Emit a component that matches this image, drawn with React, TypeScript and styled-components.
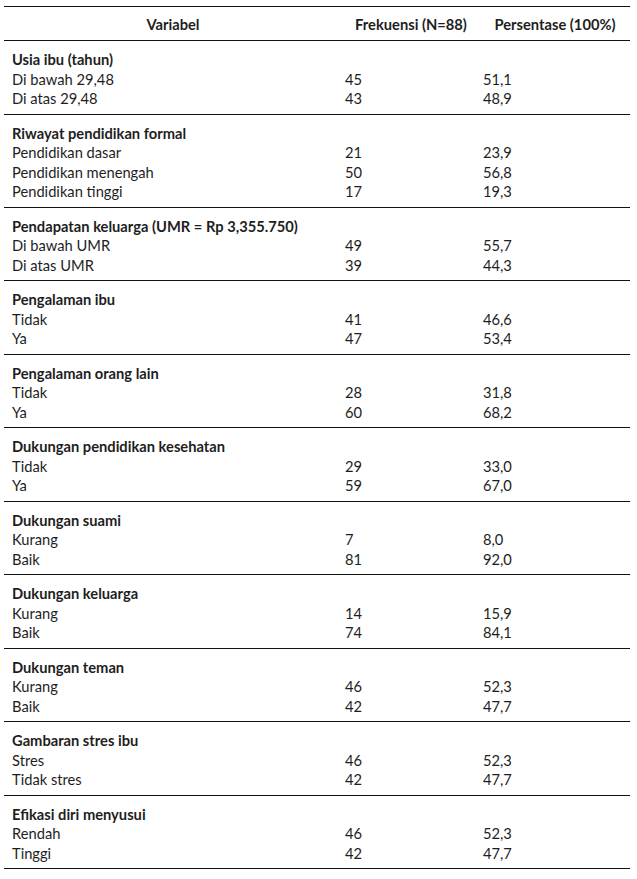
import styled, { createGlobalStyle } from "styled-components";

type Item = { label: string; freq: string; pct: string };
type Group = { title: string; items: Item[] };

const groups: Group[] = [
  {
    title: "Usia ibu (tahun)",
    items: [
      { label: "Di bawah 29,48", freq: "45", pct: "51,1" },
      { label: "Di atas 29,48", freq: "43", pct: "48,9" },
    ],
  },
  {
    title: "Riwayat pendidikan formal",
    items: [
      { label: "Pendidikan dasar", freq: "21", pct: "23,9" },
      { label: "Pendidikan menengah", freq: "50", pct: "56,8" },
      { label: "Pendidikan tinggi", freq: "17", pct: "19,3" },
    ],
  },
  {
    title: "Pendapatan keluarga (UMR = Rp 3,355.750)",
    items: [
      { label: "Di bawah UMR", freq: "49", pct: "55,7" },
      { label: "Di atas UMR", freq: "39", pct: "44,3" },
    ],
  },
  {
    title: "Pengalaman ibu",
    items: [
      { label: "Tidak", freq: "41", pct: "46,6" },
      { label: "Ya", freq: "47", pct: "53,4" },
    ],
  },
  {
    title: "Pengalaman orang lain",
    items: [
      { label: "Tidak", freq: "28", pct: "31,8" },
      { label: "Ya", freq: "60", pct: "68,2" },
    ],
  },
  {
    title: "Dukungan pendidikan kesehatan",
    items: [
      { label: "Tidak", freq: "29", pct: "33,0" },
      { label: "Ya", freq: "59", pct: "67,0" },
    ],
  },
  {
    title: "Dukungan suami",
    items: [
      { label: "Kurang", freq: "7", pct: "8,0" },
      { label: "Baik", freq: "81", pct: "92,0" },
    ],
  },
  {
    title: "Dukungan keluarga",
    items: [
      { label: "Kurang", freq: "14", pct: "15,9" },
      { label: "Baik", freq: "74", pct: "84,1" },
    ],
  },
  {
    title: "Dukungan teman",
    items: [
      { label: "Kurang", freq: "46", pct: "52,3" },
      { label: "Baik", freq: "42", pct: "47,7" },
    ],
  },
  {
    title: "Gambaran stres ibu",
    items: [
      { label: "Stres", freq: "46", pct: "52,3" },
      { label: "Tidak stres", freq: "42", pct: "47,7" },
    ],
  },
  {
    title: "Efikasi diri menyusui",
    items: [
      { label: "Rendah", freq: "46", pct: "52,3" },
      { label: "Tinggi", freq: "42", pct: "47,7" },
    ],
  },
];

const GlobalStyle = createGlobalStyle`
  body {
    margin: 0;
    background: #ffffff;
    font-family: Lato, "Open Sans", sans-serif;
    color: #1e1e1e;
  }
`;

const Page = styled.div`
  padding: 6px 7px 0 4px;
`;

const Table = styled.div`
  border-top: 1.5px solid #111;
`;

const HeaderRow = styled.div`
  display: grid;
  grid-template-columns: 338px 138px 1fr;
  height: 33px;
  align-items: center;
  border-bottom: 1.5px solid #111;
  font-size: 14.7px;
  font-weight: 700;
`;

const HeadCell = styled.div`
  text-align: center;
`;

const Section = styled.div`
  padding: 8.5px 0 5.5px;
  border-bottom: 1.5px solid #111;
`;

const Row = styled.div`
  display: grid;
  grid-template-columns: 338px 138px 1fr;
  height: 19.5px;
  align-items: center;
  font-size: 14.7px;
`;

const Title = styled.div`
  padding-left: 8px;
  font-weight: 700;
`;

const Label = styled.div`
  padding-left: 8px;
`;

const Value = styled.div`
  padding-left: 3px;
`;

export default function App() {
  return (
    <>
      <GlobalStyle />
      <Page>
        <Table>
          <HeaderRow>
            <HeadCell>Variabel</HeadCell>
            <HeadCell>Frekuensi (N=88)</HeadCell>
            <HeadCell>Persentase (100%)</HeadCell>
          </HeaderRow>
          {groups.map((g) => (
            <Section key={g.title}>
              <Row>
                <Title>{g.title}</Title>
              </Row>
              {g.items.map((it) => (
                <Row key={it.label}>
                  <Label>{it.label}</Label>
                  <Value>{it.freq}</Value>
                  <Value>{it.pct}</Value>
                </Row>
              ))}
            </Section>
          ))}
        </Table>
      </Page>
    </>
  );
}
